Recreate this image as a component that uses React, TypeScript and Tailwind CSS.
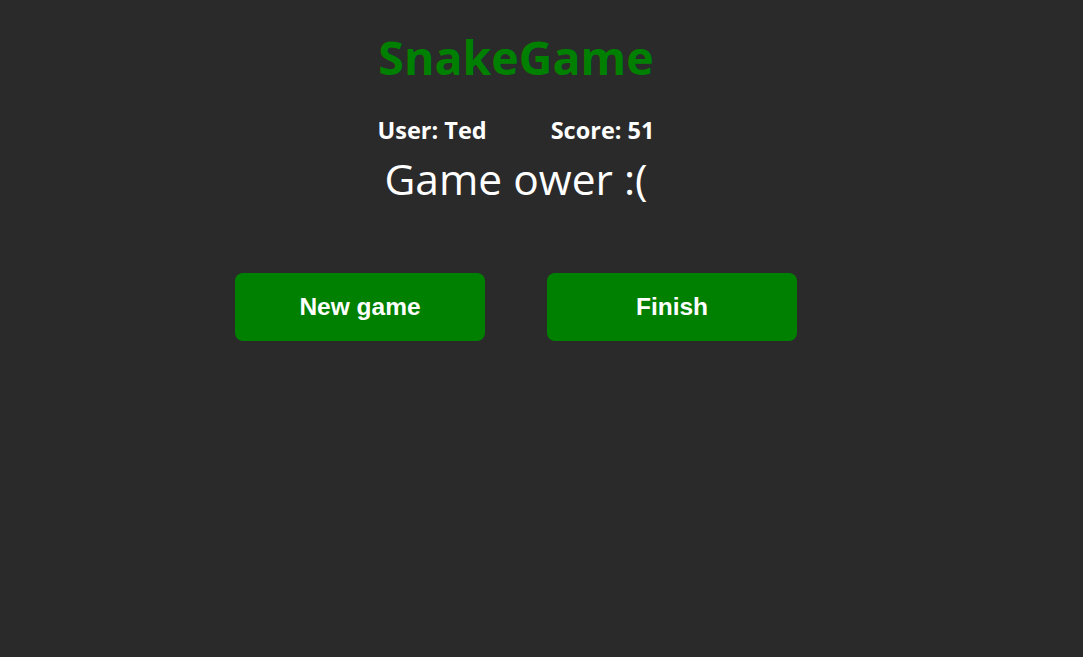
export default function App() {
  return (
    <div className="min-h-screen w-full bg-[#2a2a2a] font-['Open_Sans','Noto_Sans',sans-serif]">
      <div className="flex w-[1032px] flex-col items-center pt-[26px]">
        <h1 className="text-[46.5px] font-bold leading-[62px] text-[#008000]">SnakeGame</h1>
        <div className="mt-[27px] flex gap-[64px] text-[23.5px] font-bold leading-[30px] text-white">
          <span>User: Ted</span>
          <span>Score: 51</span>
        </div>
        <div className="mt-[8px] text-[42.5px] leading-[52px] text-white">Game ower :(</div>
        <div className="mt-[68px] flex gap-[62px]">
          <button className="h-[68px] w-[250px] rounded-[8px] bg-[#008000] font-['Liberation_Sans',Arial,sans-serif] text-[24.5px] font-bold text-white">
            New game
          </button>
          <button className="h-[68px] w-[250px] rounded-[8px] bg-[#008000] font-['Liberation_Sans',Arial,sans-serif] text-[24.5px] font-bold text-white">
            Finish
          </button>
        </div>
      </div>
    </div>
  );
}
